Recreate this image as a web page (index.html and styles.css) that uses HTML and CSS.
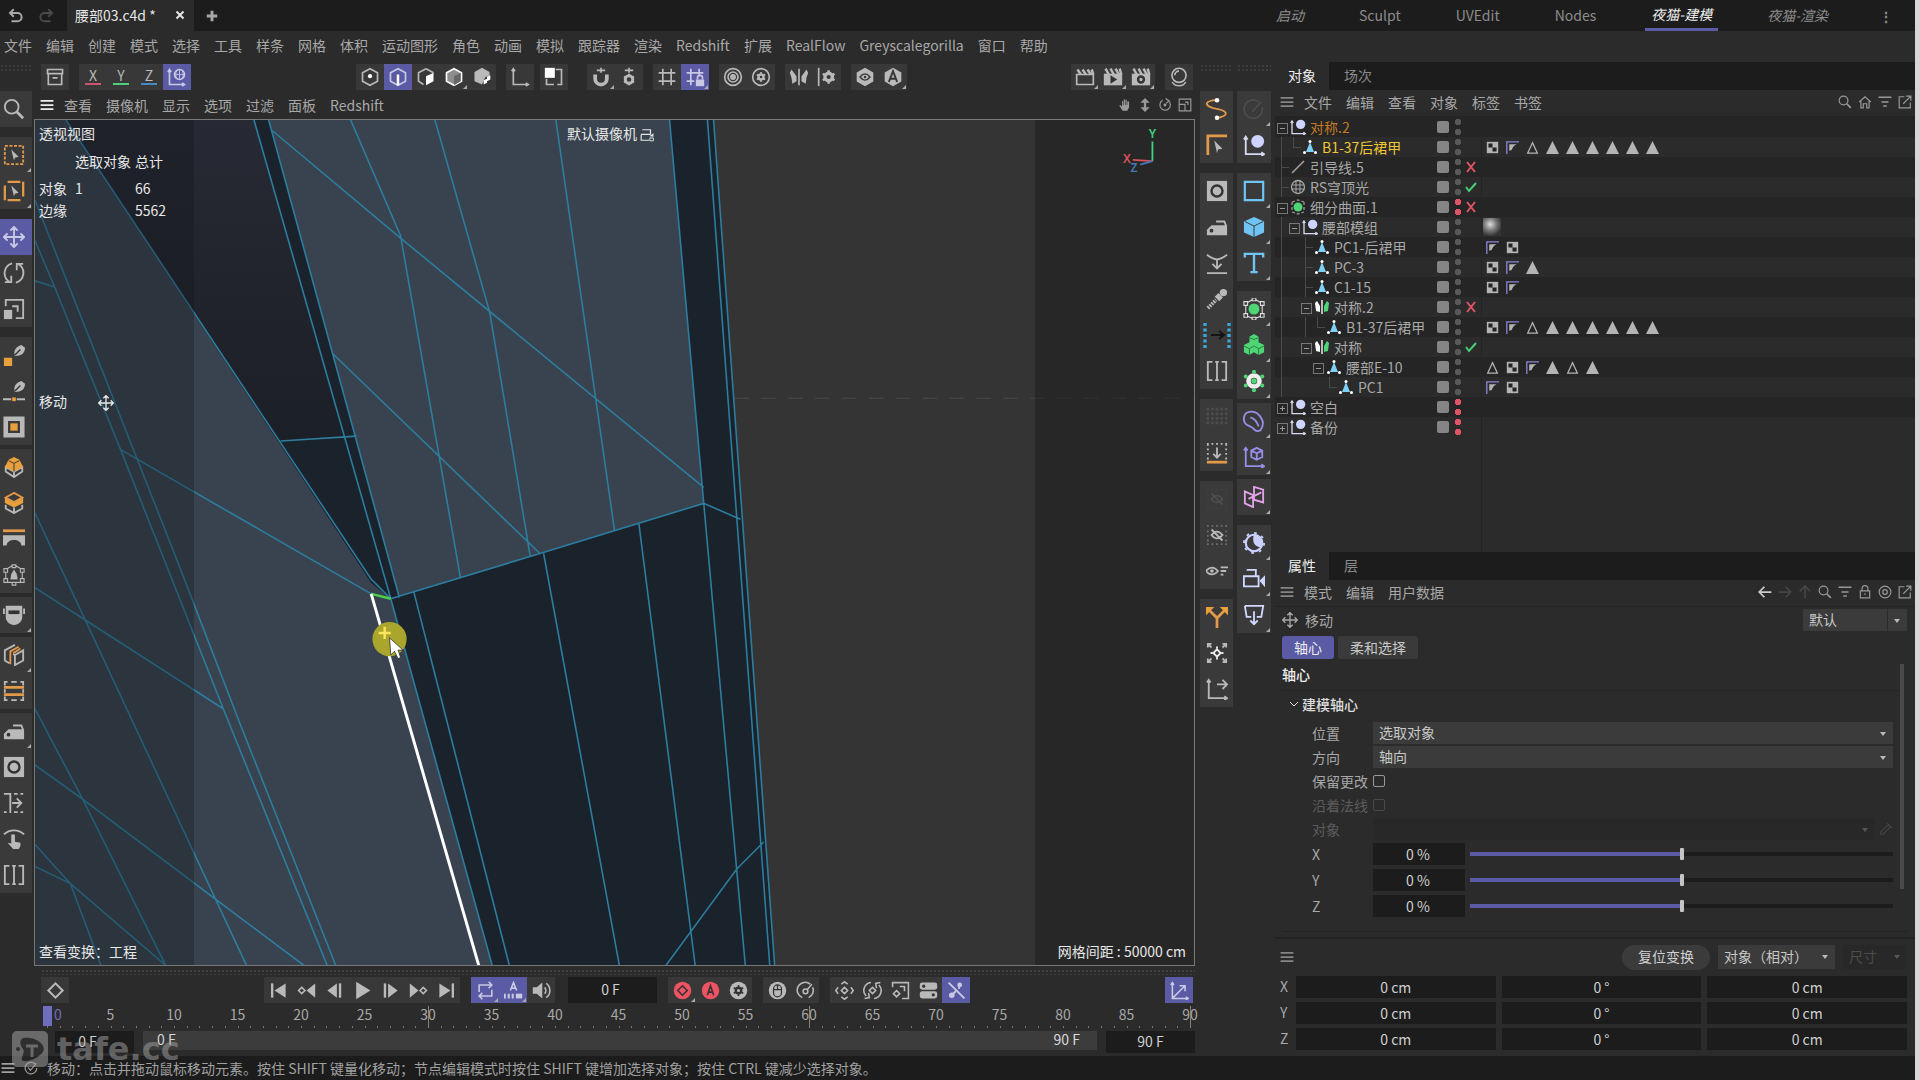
FILE: index.html
```html
<!DOCTYPE html>
<html lang="zh-CN">
<head>
<meta charset="utf-8">
<title>腰部03.c4d</title>
<link rel="stylesheet" href="styles.css">
</head>
<body>
<svg class="defs" aria-hidden="true">
<symbol id="undo" viewBox="0 0 24 24"><path d="M9 3 4 8l5 5M4 8h10a5.500 5.500 0 0 1 0 11H6" stroke-width="2.600"/></symbol>
<symbol id="redo" viewBox="0 0 24 24"><path d="m15 3 5 5-5 5M20 8H10a5.500 5.500 0 0 0 0 11h8" stroke-width="2.600"/></symbol>
<symbol id="x" viewBox="0 0 24 24"><path d="m5 5 14 14M19 5 5 19" stroke-width="4"/></symbol>
<symbol id="plus" viewBox="0 0 24 24"><path d="M12 3v18M3 12h18" stroke-width="5"/></symbol>
<symbol id="burger" viewBox="0 0 24 24"><path d="M1 5h22M1 12h22M1 19h22" stroke-width="3"/></symbol>
<symbol id="archive" viewBox="0 0 24 24"><path d="M3 3h18v5H3zM4 8v13h16V8M9 13h6"/></symbol>
<symbol id="world" viewBox="0 0 24 24"><path d="M3 4v17h18M1 6l2-3 2 3M18 19l3 2-3 2"/><circle cx="15" cy="9" r="6"/><path d="M9 9h12M15 3v12M12 4c-2 4-2 6 0 10M18 4c2 4 2 6 0 10" stroke-width="1"/></symbol>
<symbol id="hexdot" viewBox="0 0 24 24"><path d="m12 2 9 5v10l-9 5-9-5V7z"/><circle cx="12" cy="11" r="2.500" class="w"/></symbol>
<symbol id="hexedge" viewBox="0 0 24 24"><path d="m12 2 9 5v10l-9 5-9-5V7z"/><path d="M12 9v13" class="ws" stroke-width="3"/></symbol>
<symbol id="hexface" viewBox="0 0 24 24"><path d="m12 2 9 5M12 2 3 7v10l6 4"/><path d="m12 11 9-4v10l-9 5z" class="w"/></symbol>
<symbol id="hexsolid" viewBox="0 0 24 24"><path d="m12 2 9 5v10l-9 5-9-5V7z" fill="#8d8d8d" stroke="#fff"/><path d="m12 11 8-4v10l-8 5z" fill="#666" stroke="none"/></symbol>
<symbol id="hexuv" viewBox="0 0 24 24"><path d="m12 1 9 5v5l-5 1-4 9-9-4V6z" class="f"/><path d="m14 16 4-2v5l-4 2zM18 12l4-2v5l-4 2z" class="w"/></symbol>
<symbol id="axis" viewBox="0 0 24 24"><path d="M4 3v18h17M2 5l2-3 2 3M19 19l3 2-3 2"/></symbol>
<symbol id="sqin" viewBox="0 0 24 24"><path d="M14 3h7v18h-5M3 14v7h9"/><path d="M1 1h12v12H1z" class="w"/></symbol>
<symbol id="magnet" viewBox="0 0 24 24"><path d="M5 9v5a7 7 0 0 0 14 0V9" stroke-width="4.500"/><path d="M7 4h10M12 1v6"/></symbol>
<symbol id="plusgear" viewBox="0 0 24 24"><path d="M7 4h10M12 1v6"/><circle cx="12" cy="15" r="4.500" stroke-width="3.500"/><path d="M12 8v14M6 11.500l12 7M6 18.500l12-7" stroke-width="2.500" stroke-dasharray="3 8 3"/></symbol>
<symbol id="grid" viewBox="0 0 24 24"><path d="M7 2v20M17 2v20M2 7h20M2 17h20"/></symbol>
<symbol id="gridlock" viewBox="0 0 24 24"><path d="M7 2v20M17 2v8M2 7h20M2 17h9"/><path d="M13 15h10v8H13z" class="f"/><path d="M15 15v-2a3 3 0 0 1 6 0v2"/></symbol>
<symbol id="target" viewBox="0 0 24 24"><circle cx="12" cy="12" r="10"/><circle cx="12" cy="12" r="6"/><circle cx="12" cy="12" r="2" stroke-width="3"/></symbol>
<symbol id="focusring" viewBox="0 0 24 24"><circle cx="12" cy="12" r="10"/><circle cx="12" cy="12" r="4"/></symbol>
<symbol id="gearring" viewBox="0 0 24 24"><circle cx="12" cy="12" r="10"/><circle cx="12" cy="12" r="3" stroke-width="3"/><path d="M12 6v12M7 9l10 6M7 15l10-6" stroke-width="2" stroke-dasharray="2 8 2"/></symbol>
<symbol id="fly" viewBox="0 0 24 24"><path d="M12 2v20"/><path d="M9 11 3 3 1 7l2 6 1 7 5-3zM15 11l6-8 2 4-2 6-1 7-5-3z" class="f"/></symbol>
<symbol id="symgear" viewBox="0 0 24 24"><path d="M2 1v22"/><circle cx="14" cy="12" r="4.500" stroke-width="4"/><path d="M14 4v3M14 17v3M7 8l3 2M18 14l3 2M7 16l3-2M18 10l3-2" stroke-width="3"/></symbol>
<symbol id="hexeye" viewBox="0 0 24 24"><path d="m12 1 10 5.500v11L12 23 2 17.500v-11z" class="f"/><path d="M6 12c4-5 8-5 12 0-4 5-8 5-12 0z" stroke="#383838" stroke-width="1.600"/><circle cx="12" cy="12" r="1.500" fill="#383838" stroke="none"/></symbol>
<symbol id="hexa" viewBox="0 0 24 24"><path d="m12 1 10 5.500v11L12 23 2 17.500v-11z" class="f"/><path d="m7 18 5-13 5 13M9 14h6" stroke="#383838" stroke-width="2.400"/></symbol>
<symbol id="clap" viewBox="0 0 24 24"><path d="M2 9h20v12H2z"/><path d="m3 3 4 6M9 3l4 6M15 3l4 6M20 3l2 6" stroke-width="3"/></symbol>
<symbol id="clapplay" viewBox="0 0 24 24"><path d="M1 8h22v14H1z" class="f"/><path d="m3 2 4 7M9 2l4 7M15 2l4 7M20 2l2 7" stroke-width="3"/><path d="m9 10 8 5-8 5z" fill="#333" stroke="none"/></symbol>
<symbol id="clapgear" viewBox="0 0 24 24"><path d="M1 8h22v14H1z" class="f"/><path d="m3 2 4 7M9 2l4 7M15 2l4 7M20 2l2 7" stroke-width="3"/><circle cx="12" cy="15" r="3.500" stroke="#333" stroke-width="3"/></symbol>
<symbol id="ball" viewBox="0 0 24 24"><circle cx="12" cy="10" r="8.500"/><path d="M7 10a5 5 0 0 1 5-5M4 18c3 6 13 6 16 0"/></symbol>
<symbol id="hand" viewBox="0 0 24 24"><path d="M8 22 2 13l2-1 3 3V5h2v7h1V2h2v10h1V3h2v9h1V6h3v10l-3 6z" class="f"/></symbol>
<symbol id="updown" viewBox="0 0 24 24"><path d="m12 0 8 8h-6v8h6l-8 8-8-8h6V8H4z" class="f"/></symbol>
<symbol id="orbit" viewBox="0 0 24 24"><path d="M8 4a9 9 0 1 0 10 1M13 1l6 4-5 4"/><circle cx="12" cy="12" r="2.500" class="f"/></symbol>
<symbol id="maxi" viewBox="0 0 24 24"><path d="M2 2h20v20H2zM2 11h10v11M12 7h5v5"/></symbol>
<symbol id="search" viewBox="0 0 24 24"><circle cx="9.500" cy="9.500" r="7.500"/><path d="m15 15 7 7" stroke-width="3"/></symbol>
<symbol id="selrect" viewBox="0 0 24 24"><path d="M2 2h20v20H2z" class="o" stroke-dasharray="3.300 1.700"/><path d="m9 6 8 8-4 1-1 3z" class="f"/></symbol>
<symbol id="selbox" viewBox="0 0 24 24"><path d="M5 2h14M22 2v16M19 22H5M2 6v16" class="o" stroke-width="2.500"/><path d="m9 6 8 8-4 1-1 3z" class="f"/></symbol>
<symbol id="move" viewBox="0 0 24 24"><path d="M12 1v22M1 12h22M8 5l4-4 4 4M8 19l4 4 4-4M5 8l-4 4 4 4M19 8l4 4-4 4"/></symbol>
<symbol id="rot" viewBox="0 0 24 24"><path d="M10 1.500a11 11 0 0 0-3 20M2 22h7v-7M14 22.500a11 11 0 0 0 3-20M22 2h-7v7"/></symbol>
<symbol id="scale" viewBox="0 0 24 24"><path d="M3 9V2h19v20h-8M10 9h6v6"/><path d="M1 13h9v10H1z" class="f"/></symbol>
<symbol id="pen" viewBox="0 0 24 24"><path d="M13 13c-2-6 1-10 7-12l4 3c0 6-4 9-11 9z" class="f"/><path d="m13 12 6-6" stroke="#333" stroke-width="1.500"/><path d="M1 15h9v9H1z" class="of"/></symbol>
<symbol id="penline" viewBox="0 0 24 24"><path d="M13 13c-2-6 1-10 7-12l4 3c0 6-4 9-11 9z" class="f"/><path d="m13 12 6-6" stroke="#333" stroke-width="1.500"/><path d="M0 21h9M15 21h9"/><path d="M10 19h4v4h-4z" class="of"/></symbol>
<symbol id="inset" viewBox="0 0 24 24"><path d="M3 3h18v18H3z" stroke-width="5"/><path d="M8 8h8v8H8z" class="of"/></symbol>
<symbol id="cubetop" viewBox="0 0 24 24"><path d="m3 12 9 5 9-5v5l-9 6-9-6zM12 17v6"/><path d="m12 1 6 3 4 8-10 5-10-5 4-8z" class="of"/><path d="m6 5 6 3 6-3M12 8v9" stroke="#333" stroke-width="1"/></symbol>
<symbol id="cubemid" viewBox="0 0 24 24"><path d="m12 1 9 5-9 5-9-5z" class="o"/><path d="m2 6 10 6 10-6v6l-10 5-10-5z" class="of"/><path d="M3 14v4l9 5 9-5v-4M12 17v6"/></symbol>
<symbol id="bridge" viewBox="0 0 24 24"><path d="M0 3h24" class="o" stroke-width="3"/><path d="M0 8h24v11h-4c0-8-16-8-16 0H0z" class="f"/></symbol>
<symbol id="lattice" viewBox="0 0 24 24"><path d="M1 5h4v4H1zM19 5h4v4h-4zM1 16h4v4H1zM19 16h4v4h-4zM10 1h4v3h-4zM10 20h4v3h-4zM5 5l5-3M14 2l5 3M3 9v7M21 9v7M5 20h5M14 20h5" stroke-width="1.200"/><path d="m8 17 1-6 3-5 3 5 1 6z" class="f"/></symbol>
<symbol id="mask" viewBox="0 0 24 24"><path d="M3 2h18v12c0 5-4 9-9 9s-9-4-9-9z" class="f"/><path d="M6 9h12" stroke="#333" stroke-width="4"/><path d="M1 5v6M23 5v6"/></symbol>
<symbol id="layers" viewBox="0 0 24 24"><path d="m13 1-11 6v11l5 3M22 7v11l-9 5V12zM13 12l-2-1"/><path d="m17 3-9 5v14M19 5l-8 5" class="o"/></symbol>
<symbol id="stripes" viewBox="0 0 24 24"><path d="M2 1v5M22 1v5M2 18v5M22 18v5M2 2h3M9 2h6M19 2h3M2 22h3M9 22h6M19 22h3M2 10v4M22 10v4"/><path d="M1 8h22M1 16h22" class="o" stroke-width="3"/></symbol>
<symbol id="iron" viewBox="0 0 24 24"><path d="M1 21v-6l5-5h17v11z" class="f"/><path d="M11 6h9l2 5"/><circle cx="6" cy="16" r="2" fill="#333" stroke="none"/></symbol>
<symbol id="circsq" viewBox="0 0 24 24"><path d="M1 1h22v22H1z" class="f"/><circle cx="12" cy="12" r="6" stroke="#333" stroke-width="2.600"/></symbol>
<symbol id="slide" viewBox="0 0 24 24"><path d="M8 1v22M10 12h9M15 7l5 5-5 5M1 2h6M1 22h3M12 2h4M19 2h3M12 22h4M19 22h3"/></symbol>
<symbol id="touch" viewBox="0 0 24 24"><path d="M1 7c6-6 16-6 22 0"/><path d="M9 7h4v8l6 1v4l-2 3h-6l-6-7 4 1z" class="f"/></symbol>
<symbol id="split" viewBox="0 0 24 24"><path d="M2 1v22M22 1v22M12 1v22M2 2h5M2 22h5M17 2h5M17 22h5M10 2h4M10 22h4"/></symbol>
<symbol id="spline" viewBox="0 0 24 24"><path d="M12 2C-2 3-2 8 8 11c18 3 17 8 4 11" class="o"/><circle cx="12" cy="2.500" r="2.500" class="w"/><circle cx="12" cy="21.500" r="2.500" class="w"/></symbol>
<symbol id="blocked" viewBox="0 0 24 24"><path d="M17 4a10 10 0 1 0 4 6M10 15 20 4"/></symbol>
<symbol id="corner" viewBox="0 0 24 24"><path d="M2 23V2h21" class="o" stroke-width="3"/><path d="m9 7 9 9-5 1-1 4z" class="f"/></symbol>
<symbol id="null" viewBox="0 0 24 24"><path d="M3 4v18h18M1 6l2-3 2 3M20 20l3 2-3 2" stroke="#d6d9ef"/><circle cx="16" cy="8" r="7" fill="#ccd4ff" stroke="none"/></symbol>
<symbol id="square" viewBox="0 0 24 24"><path d="M2 2h20v20H2z" stroke="#70c4f4" stroke-width="2.400"/></symbol>
<symbol id="cube" viewBox="0 0 24 24"><path d="m12 1 11 5v12l-11 5-11-5V6z" fill="#70c4f4" stroke="none"/><path d="m2 6 10 5 10-5M12 11v12" stroke="#333" stroke-width="1"/></symbol>
<symbol id="text" viewBox="0 0 24 24"><path d="M2 6V2h20v4M12 2v20M8 22h8" stroke="#70c4f4" stroke-width="2.600"/></symbol>
<symbol id="flatten" viewBox="0 0 24 24"><path d="M1 3c4 3 7 5 11 5s7-2 11-5M12 8v9M7 13l5 5 5-5M1 23h22"/></symbol>
<symbol id="drill" viewBox="0 0 24 24"><circle cx="19" cy="5" r="4" class="f"/><path d="m12 12 4-4" stroke-width="7"/><path d="m2 22 9-9" stroke-width="4" stroke-dasharray="2 1"/></symbol>
<symbol id="dots2" viewBox="0 0 28 28"><path d="M2 2v25M26 2v25" stroke="#39a7de" stroke-width="3.400" stroke-dasharray="3 2.500"/><path d="M8 14h12M16 10l5 4-5 4" stroke="#141414"/></symbol>
<symbol id="dotarea" viewBox="0 0 24 24"><path d="M2 2v20M7 2v20M12 2v20M17 2v20M22 2v20" stroke-width="3" stroke-dasharray="3 2"/></symbol>
<symbol id="dotdown" viewBox="0 0 24 24"><path d="M1 2h22M2 2v17M22 2v17" stroke-dasharray="2 3"/><path d="M12 6v11M8 13l4 4 4-4"/><path d="M1 22h22" class="o" stroke-width="3"/></symbol>
<symbol id="doteye" viewBox="0 0 24 24"><path d="M1 2h22M1 22h22M2 7v12M22 7v12" stroke-dasharray="2 3" opacity=".4"/><path d="M6 12c4-5 8-5 12 0-4 5-8 5-12 0zM6 6l12 12"/></symbol>
<symbol id="eyelist" viewBox="0 0 24 24"><path d="M0 12c4-5 9-5 13 0-4 5-9 5-13 0zM16 8h8M16 12h6M16 16h3"/><circle cx="6.500" cy="12" r="2" class="f"/></symbol>
<symbol id="fork" viewBox="0 0 24 24"><path d="M12 24V13L3 4M12 13l9-9" class="o" stroke-width="3"/><path d="M0 1h9L0 10zM24 1h-9l9 9z" class="of"/></symbol>
<symbol id="focus" viewBox="0 0 24 24"><path d="M2 6V2h4M18 2h4v4M2 18v4h4M18 22h4v-4M2 2l4 4M22 2l-4 4M2 22l4-4M22 22l-4-4"/><path d="m12 8 4 4-4 4-4-4zM12 5v2M12 17v2M5 12h2M17 12h2" stroke="#eee"/></symbol>
<symbol id="axisright" viewBox="0 0 24 24"><path d="M3 3v19h19M1 5l2-3 2 3M20 20l3 2-3 2M12 7h10M18 2l5 5-5 5"/></symbol>
<symbol id="axisdiag" viewBox="0 0 24 24"><path d="M3 2v20h20M3 22 18 7M1 5l2-3 2 3M20 20l3 2-3 2M12 6h7v7"/></symbol>
<symbol id="subdiv" viewBox="0 0 24 24"><path d="M1 4h4v4H1zM19 4h4v4h-4zM1 17h4v4H1zM19 17h4v4h-4zM10 0h4v3h-4zM10 21h4v3h-4zM5 5l5-3M14 2l5 3M3 8v9M21 8v9M5 20l5 2M14 22l5-2" stroke="#ddd" stroke-width="1.200"/><circle cx="12" cy="12" r="6" class="g"/></symbol>
<symbol id="subs" viewBox="0 0 16 16"><path d="M2 3v10M14 3v10M2 3l6-2 6 2M2 13l6 2 6-2" stroke="#999" stroke-width="1.300" stroke-dasharray="3 2"/><circle cx="8" cy="8" r="4.500" class="g"/></symbol>
<symbol id="boxes" viewBox="0 0 24 24"><path d="m12 0 5 3v6l6 3v8l-6 3-5-3-5 3-6-3v-8l6-3V3z" class="g"/><path d="m1 13 6 3 5-3 5 3 6-3M7 16v7M17 16v7M7 4l5 2 5-2" stroke="#257a3b" stroke-width="1"/></symbol>
<symbol id="cloner" viewBox="0 0 24 24"><circle cx="12" cy="12" r="6" stroke="#eee" stroke-width="5"/><circle cx="12" cy="12" r="3" class="g"/><g class="g"><circle cx="12" cy="2" r="2.200"/><circle cx="12" cy="22" r="2.200"/><circle cx="3" cy="7" r="2.200"/><circle cx="21" cy="7" r="2.200"/><circle cx="3" cy="17" r="2.200"/><circle cx="21" cy="17" r="2.200"/></g></symbol>
<symbol id="bend" viewBox="0 0 24 24"><path d="M4 3c7-3 12-1 16 6 3 5 2 9-1 13-3 2-5 1-7-1C10 17 4 18 2 14S1 5 4 3zM8 8c4 1 7 4 9 10" stroke="#978ee8"/></symbol>
<symbol id="axiscube" viewBox="0 0 24 24"><path d="M3 3v19h19M1 5l2-3 2 3M20 20l3 2-3 2m-5-22 6 3v7l-6 3-6-3V5zM9 5l6 3 6-3M15 8v7" stroke="#978ee8"/></symbol>
<symbol id="planes" viewBox="0 0 24 24"><path d="M2 6v13l9 4V10zM12 5v10l10 3V4L12 1zM6 14l14-7" stroke="#e3a3e8"/></symbol>
<symbol id="sky" viewBox="0 0 24 24"><circle cx="12" cy="12" r="9" stroke="#c9d2ff" stroke-width="2.400"/><circle cx="12" cy="12" r="11" stroke="#c9d2ff" stroke-width="2" stroke-dasharray="3 5.600"/><path d="M12 3a9 9 0 0 1 8 13c-6 2-11-5-8-13z" fill="#c9d2ff" stroke="none"/></symbol>
<symbol id="cam" viewBox="0 0 24 24"><path d="M4 2h10v7M1 9h16v11H1z" stroke="#d0d8ff"/><path d="m18 14 6-6v13z" fill="#d0d8ff" stroke="none"/></symbol>
<symbol id="light" viewBox="0 0 24 24"><path d="M2 2h20l-2 12h-5M9 14H4L2 2M12 8v14M8 18l4 4 4-4" stroke="#d0d8ff"/></symbol>
<symbol id="home" viewBox="0 0 24 24"><path d="m2 12 10-9 10 9M5 10v12h4v-7h6v7h4V10"/></symbol>
<symbol id="filter" viewBox="0 0 24 24"><path d="M1 4h22M6 12h12M9 19h6" stroke-width="2.500"/></symbol>
<symbol id="ext" viewBox="0 0 24 24"><path d="M11 3H2v19h19v-9M9 15 22 2M14 2h8v8"/></symbol>
<symbol id="left" viewBox="0 0 24 24"><path d="M3 12h20M11 3l-9 9 9 9" stroke-width="3"/></symbol>
<symbol id="lock" viewBox="0 0 24 24"><path d="M4 10h16v12H4zM7 10V6a5 5 0 0 1 10 0v4M12 14v3"/></symbol>
<symbol id="obj" viewBox="0 0 16 16"><path d="m8 3 4 10H4z" fill="#7fd0f5" stroke="none"/><circle cx="8" cy="2.500" r="1.500" class="w"/><circle cx="2.500" cy="13.500" r="1.500" class="w"/><circle cx="13.500" cy="13.500" r="1.500" class="w"/></symbol>
<symbol id="sym" viewBox="0 0 16 16"><path d="M6 7 3 2 1 4l1 8 4 1z" class="w"/><path d="m10 7 3-5 2 2-1 8-4 1z" class="g"/><path d="M8 1v14" stroke="#eee" stroke-width="1.500"/></symbol>
<symbol id="line" viewBox="0 0 16 16"><path d="M2 14 14 2" stroke-width="1.400"/></symbol>
<symbol id="globe" viewBox="0 0 16 16"><circle cx="8" cy="8" r="6.500" stroke-width="1.300"/><path d="M2 6h12M2 10h12M6 2v12M10 2v12" stroke-width="1"/></symbol>
<symbol id="chk" viewBox="0 0 16 16"><path d="M1 1h14v14H1z" class="f"/><path d="M3 3h5v5H3zM8 8h5v5H8z" fill="#222" stroke="none"/></symbol>
<symbol id="phong" viewBox="0 0 16 16"><path d="M1 16V1h15" stroke="#8a86d8" stroke-width="1.600"/><path d="M4 4h9c-3 1-5 4-6 7l-3 1z" class="f"/></symbol>
<symbol id="tri" viewBox="0 0 16 16"><path d="m8 0 8 16H0z" class="f"/></symbol>
<symbol id="trio" viewBox="0 0 16 16"><path d="m8 2 6 13H2z" stroke-width="1.500"/></symbol>
<symbol id="yes" viewBox="0 0 12 12"><path d="m1 6 3 4 7-8" stroke="#49cf78"/></symbol>
<symbol id="no" viewBox="0 0 12 12"><path d="m2 1 8 10M10 1 2 11" stroke="#e05565"/></symbol>
<symbol id="dia" viewBox="0 0 24 24"><path d="m12 3 9 9-9 9-9-9z" stroke-width="2.600"/></symbol>
<symbol id="first" viewBox="0 0 24 24"><path d="M4 3v18" stroke-width="3"/><path d="M21 3v18L7 12z" class="f"/></symbol>
<symbol id="prevkey" viewBox="0 0 24 24"><path d="m6 8 4 4-4 4-4-4z"/><path d="M23 3v18l-11-9z" class="f"/></symbol>
<symbol id="prev" viewBox="0 0 24 24"><path d="M15 3v18L3 12z" class="f"/><path d="M19 3v18" stroke-width="3"/></symbol>
<symbol id="play" viewBox="0 0 24 24"><path d="m4 1 18 11L4 23z" class="f"/></symbol>
<symbol id="next" viewBox="0 0 24 24"><path d="m9 3 12 9-12 9z" class="f"/><path d="M5 3v18" stroke-width="3"/></symbol>
<symbol id="nextkey" viewBox="0 0 24 24"><path d="m18 8 4 4-4 4-4-4z"/><path d="m1 3 11 9-11 9z" class="f"/></symbol>
<symbol id="last" viewBox="0 0 24 24"><path d="M20 3v18" stroke-width="3"/><path d="m3 3 14 9-14 9z" class="f"/></symbol>
<symbol id="loop" viewBox="0 0 24 24"><path d="M4 14V5h16M16 1l4 4-4 4M20 11v8H4M8 15l-4 4 4 4"/></symbol>
<symbol id="auto" viewBox="0 0 24 24"><path d="m8 12 4-10 4 10M9 9h6"/><path d="M1 16v6M6 16v6M11 16v6" stroke-width="2.600"/><path d="M15 16h8v6h-8z" class="f"/></symbol>
<symbol id="sound" viewBox="0 0 24 24"><path d="M1 8h5l7-6v20l-7-6H1z" class="f"/><path d="M16 8c2 2 2 6 0 8M18 3c6 4 6 14 0 18"/></symbol>
<symbol id="rec" viewBox="0 0 24 24"><circle cx="12" cy="12" r="11" fill="#ee5363" stroke="none"/><path d="m12 6 6 6-6 6-6-6z" stroke="#333"/></symbol>
<symbol id="reca" viewBox="0 0 24 24"><circle cx="12" cy="12" r="11" fill="#ee5363" stroke="none"/><path d="m8 18 4-12 4 12M9 14h6" stroke="#333"/></symbol>
<symbol id="recgear" viewBox="0 0 24 24"><circle cx="12" cy="12" r="11" class="f"/><circle cx="12" cy="12" r="3.500" stroke="#333" stroke-width="3"/><path d="M12 5v14M6 8.500l12 7M6 15.500l12-7" stroke="#333" stroke-dasharray="3 8 3"/></symbol>
<symbol id="mouse" viewBox="0 0 24 24"><circle cx="12" cy="12" r="11" class="f"/><path d="M7 11h10M12 5v6M7 10a5 5 0 0 1 10 0v5a5 5 0 0 1-10 0z" stroke="#333" stroke-width="1.600"/></symbol>
<symbol id="gauge" viewBox="0 0 24 24"><path d="M8 21A10 10 0 1 1 18 4M21 8a10 10 0 0 1-5 13"/><circle cx="12" cy="13" r="3"/><path d="m14 11 6-7"/></symbol>
<symbol id="kmove" viewBox="0 0 24 24"><path d="m12 8 4 4-4 4-4-4zM8 4l4-3 4 3M8 20l4 3 4-3M4 8l-3 4 3 4M20 8l3 4-3 4"/></symbol>
<symbol id="krot" viewBox="0 0 24 24"><path d="m12 8 4 4-4 4-4-4zM10 2a10 10 0 0 0-6 17M2 22l6-1-1-6M14 22a10 10 0 0 0 6-17M22 2l-6 1 1 6"/></symbol>
<symbol id="kscale" viewBox="0 0 24 24"><path d="M2 8V2h20v20h-8M7 12l4 4-4 4-4-4zM11 7h6v6"/></symbol>
<symbol id="toggles" viewBox="0 0 24 24"><rect x="1" y="2" width="22" height="9" rx="3" class="f"/><rect x="1" y="13" width="22" height="9" rx="3" class="f"/><circle cx="6" cy="6.500" r="2" fill="#333" stroke="none"/><circle cx="18" cy="17.500" r="2" fill="#333" stroke="none"/></symbol>
<symbol id="nodes" viewBox="0 0 24 24"><path d="M2 2 22 22M5 19l6-6M16 4l-1 6" stroke-width="2.500"/><circle cx="6" cy="18" r="3.500" class="f"/><circle cx="16" cy="5" r="3" class="f"/></symbol>
<symbol id="tickring" viewBox="0 0 24 24"><path d="M19 5a10 10 0 1 0 3 7M7 11l4 5L21 4"/></symbol>
<symbol id="dropper" viewBox="0 0 24 24"><path d="M3 21v-4L16 4l4 4L7 21zM14 2l8 8"/></symbol>
<symbol id="camview" viewBox="0 0 24 24"><path d="M4 3h14v8M2 11h16M2 11v10h14"/><path d="m16 14 7-5v6z" class="f"/><path d="M17 17h6v5h-6z" stroke-width="1.500"/></symbol>
</svg>
<div class="app">
<header class="top">
  <button class="bare" aria-label="撤销"><svg class="i s18"><use href="#undo"/></svg></button>
  <button class="bare off" aria-label="重做"><svg class="i s18"><use href="#redo"/></svg></button>
  <div class="doc"><span>腰部03.c4d *</span><button class="bare" aria-label="关闭"><svg class="i s12"><use href="#x"/></svg></button></div>
  <button class="bare add" aria-label="新建"><svg class="i s14"><use href="#plus"/></svg></button>
  <nav class="spaces"><a href="#"><i>启动</i></a><a href="#">Sculpt</a><a href="#">UVEdit</a><a href="#">Nodes</a><a href="#" class="on"><i>夜猫-建模</i></a><a href="#"><i>夜猫-渲染</i></a><button class="bare more" aria-label="更多">⋮</button></nav>
</header>
<nav class="menu main"><a href="#">文件</a><a href="#">编辑</a><a href="#">创建</a><a href="#">模式</a><a href="#">选择</a><a href="#">工具</a><a href="#">样条</a><a href="#">网格</a><a href="#">体积</a><a href="#">运动图形</a><a href="#">角色</a><a href="#">动画</a><a href="#">模拟</a><a href="#">跟踪器</a><a href="#">渲染</a><a href="#">Redshift</a><a href="#">扩展</a><a href="#">RealFlow</a><a href="#">Greyscalegorilla</a><a href="#">窗口</a><a href="#">帮助</a></nav>
<main class="work">
<aside class="tools left">
  <div class="grip"></div>
  <div class="tg g20"><button aria-label="搜索"><svg class="i"><use href="#search"/></svg></button></div>
  <div class="tg g10"><button class="c" aria-label="框选"><svg class="i"><use href="#selrect"/></svg></button><button class="c" aria-label="选择"><svg class="i"><use href="#selbox"/></svg></button></div>
  <div class="tg g10"><button class="on" aria-label="移动"><svg class="i"><use href="#move"/></svg></button><button aria-label="旋转"><svg class="i"><use href="#rot"/></svg></button><button aria-label="缩放"><svg class="i"><use href="#scale"/></svg></button></div>
  <div class="tg g10"><button aria-label="多边形画笔"><svg class="i"><use href="#pen"/></svg></button><button aria-label="切线"><svg class="i"><use href="#penline"/></svg></button><button aria-label="嵌入"><svg class="i"><use href="#inset"/></svg></button></div>
  <div class="tg g4"><button aria-label="挤压"><svg class="i"><use href="#cubetop"/></svg></button><button aria-label="倒角"><svg class="i"><use href="#cubemid"/></svg></button><button aria-label="桥接"><svg class="i"><use href="#bridge"/></svg></button><button aria-label="晶格"><svg class="i"><use href="#lattice"/></svg></button></div>
  <div class="tg g4"><button class="c" aria-label="焊接"><svg class="i"><use href="#mask"/></svg></button></div>
  <div class="tg g4"><button class="c" aria-label="循环切割"><svg class="i"><use href="#layers"/></svg></button><button aria-label="平面切割"><svg class="i"><use href="#stripes"/></svg></button></div>
  <div class="tg g4"><button class="c" aria-label="熨烫"><svg class="i"><use href="#iron"/></svg></button><button aria-label="圆形"><svg class="i"><use href="#circsq"/></svg></button><button aria-label="滑动"><svg class="i"><use href="#slide"/></svg></button><button aria-label="推拉"><svg class="i"><use href="#touch"/></svg></button><button aria-label="分裂"><svg class="i"><use href="#split"/></svg></button></div>
</aside>
<section class="centre">
  <div class="bar">
    <div class="bg"><button aria-label="归档"><svg class="i"><use href="#archive"/></svg></button></div>
    <div class="bg"><button class="ax ax-x">X</button><button class="ax ax-y">Y</button><button class="ax ax-z">Z</button><button class="on" aria-label="坐标"><svg class="i"><use href="#world"/></svg></button></div>
    <div class="bg push"><button aria-label="点"><svg class="i"><use href="#hexdot"/></svg></button><button class="on" aria-label="边"><svg class="i"><use href="#hexedge"/></svg></button><button aria-label="多边形"><svg class="i"><use href="#hexface"/></svg></button><button class="c" aria-label="模型"><svg class="i"><use href="#hexsolid"/></svg></button><button aria-label="纹理"><svg class="i"><use href="#hexuv"/></svg></button></div>
    <div class="bg"><button aria-label="轴心"><svg class="i"><use href="#axis"/></svg></button></div>
    <div class="bg near"><button aria-label="工作平面"><svg class="i"><use href="#sqin"/></svg></button></div>
    <div class="bg far"><button class="c" aria-label="捕捉"><svg class="i"><use href="#magnet"/></svg></button><button aria-label="捕捉设置"><svg class="i"><use href="#plusgear"/></svg></button></div>
    <div class="bg"><button aria-label="网格"><svg class="i"><use href="#grid"/></svg></button><button class="on c" aria-label="锁定网格"><svg class="i"><use href="#gridlock"/></svg></button></div>
    <div class="bg"><button aria-label="衰减"><svg class="i"><use href="#target"/></svg></button><button aria-label="衰减设置"><svg class="i"><use href="#gearring"/></svg></button></div>
    <div class="bg"><button aria-label="对称"><svg class="i"><use href="#fly"/></svg></button><button aria-label="对称设置"><svg class="i"><use href="#symgear"/></svg></button></div>
    <div class="bg"><button aria-label="独显"><svg class="i"><use href="#hexeye"/></svg></button><button class="c" aria-label="自动"><svg class="i"><use href="#hexa"/></svg></button></div>
    <div class="bg push"><button class="c" aria-label="渲染视图"><svg class="i"><use href="#clap"/></svg></button><button class="c" aria-label="渲染"><svg class="i"><use href="#clapplay"/></svg></button><button class="c" aria-label="渲染设置"><svg class="i"><use href="#clapgear"/></svg></button></div>
    <div class="bg"><button aria-label="材质"><svg class="i"><use href="#ball"/></svg></button></div>
  </div>
  <nav class="menu view"><button class="bare burger" aria-label="菜单"><svg class="i s14"><use href="#burger"/></svg></button><a href="#">查看</a><a href="#">摄像机</a><a href="#">显示</a><a href="#">选项</a><a href="#">过滤</a><a href="#">面板</a><a href="#">Redshift</a>
    <span class="vi"><svg class="i s14"><use href="#hand"/></svg><svg class="i s14"><use href="#updown"/></svg><svg class="i s14"><use href="#orbit"/></svg><svg class="i s14"><use href="#maxi"/></svg></span></nav>
  <div class="viewport">
    <svg class="scene" viewBox="28 97 948 692" preserveAspectRatio="xMidYMid slice" aria-label="透视视图">
      <defs><linearGradient id="dk" x1="0" y1="0" x2="0" y2="1"><stop offset="0" stop-color="#272934"/><stop offset="1" stop-color="#161a20"/></linearGradient></defs>
      <path fill="#343434" d="M28 97h948v692H28z"/>
      <path stroke="#484848" stroke-dasharray="12 10" d="M600 325h376"/>
      <path fill="url(#dk)" d="M28 97h181l110 392-16-13L53 97z"/>
      <path fill="#38434f" d="M28 97h25l250 379 16 13 83 300H28z"/>
      <path fill="#1a222c" d="m229 360 62-4 28 133-16-13zM207 97h12l107 391-7 1z"/>
      <path fill="#38434f" d="M219 97h328l28 314-249 77z"/>
      <path fill="#1a222c" d="M547 97h36l50 692H402l-83-300 256-78z"/>
      <g fill="none" stroke="#2d7d9e" stroke-width="1.300">
        <path d="m53 97 143 215 107 161 16 16M207 97l112 392M219 97l107 391M229 360l62-4M222 106l105 88 248 204M286 97l41 95 49 280M355 97l45 158 33 199M454 97l48 336M547 97l28 314 34 378M578 97l51 692M583 97l50 692M272 289l169 163M319 489l122-37 134-41 30 13M319 489l83 300M338 484l78 305M444 452l62 337M522 428l46 361M544 789l58-79 22-22"/>
        <path d="m28 196 16 38 54 133 84 212 85 210M28 163l116 294 52 135 78 197M28 229l16 5M98 367l205 118M28 419l40 85 133 285M28 480l154 99M28 579l39 74 68 136M28 625l39 28 129 97 52 39M28 690l29 32 25 67M28 708l29 14 78 67"/>
      </g>
      <path fill="#101418" fill-opacity=".3" d="M28 97h130v692H28z"/><path fill="#151515" fill-opacity=".42" d="M846 97h130v692H846z"/>
      <path stroke="#49cf4c" stroke-width="2" d="m303 485 16 4"/><path stroke="#fff" stroke-width="2.400" d="m303 485 88 304"/>
      <circle cx="318" cy="522" r="14" fill="#aaa52c"/><path stroke="#ffe45c" stroke-width="2" d="M314 512v10M309 517h10"/>
      <path fill="#fff" stroke="#222" stroke-width=".6" d="m318 521 1 14 3-3 3 6 2-1-2-6h4z"/>
      <path stroke="#40d07c" stroke-width="1.500" d="M942 115v16"/><path stroke="#d9515c" stroke-width="1.500" d="m926 130 16 1"/><path stroke="#4579ba" stroke-width="1.500" d="m942 131-10 3"/>
      <g font-family="Noto Sans" font-size="10" font-weight="600"><text x="939" y="112" fill="#40d07c">Y</text><text x="918" y="133" fill="#d9515c">X</text><text x="924" y="140" fill="#4579ba">Z</text></g>
    </svg>
    <span class="hud title">透视视图</span>
    <table class="hud stats"><tr><td></td><td>选取对象</td><td>总计</td></tr><tr><td>对象</td><td>1</td><td>66</td></tr><tr><td>边缘</td><td></td><td>5562</td></tr></table>
    <span class="hud camera">默认摄像机 <svg class="i s14"><use href="#camview"/></svg></span>
    <span class="hud tool">移动 <svg class="i s16"><use href="#move"/></svg></span>
    <span class="hud xform">查看变换：工程</span>
    <span class="hud gridsp">网格间距 : 50000 cm</span>
  </div>
  <div class="timeline">
    <div class="grip wide"></div>
    <div class="bar play">
      <div class="bg"><button aria-label="关键帧"><svg class="i"><use href="#dia"/></svg></button></div>
      <div class="bg push"><button aria-label="起点"><svg class="i"><use href="#first"/></svg></button><button aria-label="上一关键帧"><svg class="i"><use href="#prevkey"/></svg></button><button aria-label="上一帧"><svg class="i"><use href="#prev"/></svg></button><button aria-label="播放"><svg class="i"><use href="#play"/></svg></button><button aria-label="下一帧"><svg class="i"><use href="#next"/></svg></button><button aria-label="下一关键帧"><svg class="i"><use href="#nextkey"/></svg></button><button aria-label="终点"><svg class="i"><use href="#last"/></svg></button></div>
      <div class="bg"><button class="on c" aria-label="循环"><svg class="i"><use href="#loop"/></svg></button><button class="on c" aria-label="自动"><svg class="i"><use href="#auto"/></svg></button><button aria-label="声音"><svg class="i"><use href="#sound"/></svg></button></div>
      <input class="field frame" value="0 F" aria-label="当前帧">
      <div class="bg"><button class="c" aria-label="记录"><svg class="i"><use href="#rec"/></svg></button><button aria-label="自动记录"><svg class="i"><use href="#reca"/></svg></button><button aria-label="记录设置"><svg class="i"><use href="#recgear"/></svg></button></div>
      <div class="bg"><button aria-label="鼠标"><svg class="i"><use href="#mouse"/></svg></button><button aria-label="速率"><svg class="i"><use href="#gauge"/></svg></button></div>
      <div class="bg"><button aria-label="位置"><svg class="i"><use href="#kmove"/></svg></button><button aria-label="旋转"><svg class="i"><use href="#krot"/></svg></button><button aria-label="缩放"><svg class="i"><use href="#kscale"/></svg></button><button aria-label="参数"><svg class="i"><use href="#toggles"/></svg></button><button class="on" aria-label="点级别"><svg class="i"><use href="#nodes"/></svg></button></div>
      <div class="bg push"><button class="on" aria-label="曲线"><svg class="i"><use href="#axisdiag"/></svg></button></div>
    </div>
    <div class="ruler"><span class="zero">0</span><span>5</span><span>10</span><span>15</span><span>20</span><span>25</span><span class="mark">30</span><span>35</span><span>40</span><span>45</span><span>50</span><span>55</span><span class="mark">60</span><span>65</span><span>70</span><span>75</span><span>80</span><span>85</span><span class="mark">90</span></div>
    <div class="range"><input class="field start" value="0 F" aria-label="起始帧"><div class="track"><span>0 F</span><span>90 F</span></div><input class="field end" value="90 F" aria-label="结束帧"></div>
  </div>
</section>
<aside class="tools">
  <div class="grip"></div>
  <div class="tg g20"><button aria-label="样条"><svg class="i"><use href="#spline"/></svg></button><button aria-label="角点"><svg class="i"><use href="#corner"/></svg></button></div>
  <div class="tg g10"><button aria-label="圆形"><svg class="i"><use href="#circsq"/></svg></button><button aria-label="熨烫"><svg class="i"><use href="#iron"/></svg></button><button aria-label="压平"><svg class="i"><use href="#flatten"/></svg></button><button aria-label="钻孔"><svg class="i"><use href="#drill"/></svg></button><button aria-label="连接"><svg class="i s28"><use href="#dots2"/></svg></button><button aria-label="分裂"><svg class="i"><use href="#split"/></svg></button></div>
  <div class="tg g10"><button class="off" aria-label="点阵" disabled><svg class="i"><use href="#dotarea"/></svg></button><button aria-label="下沉"><svg class="i"><use href="#dotdown"/></svg></button></div>
  <div class="tg g10"><button class="off" aria-label="隐藏" disabled><svg class="i"><use href="#doteye"/></svg></button><button aria-label="隐藏未选"><svg class="i"><use href="#doteye"/></svg></button><button aria-label="显示全部"><svg class="i"><use href="#eyelist"/></svg></button></div>
  <div class="tg g10"><button aria-label="分叉"><svg class="i"><use href="#fork"/></svg></button><button aria-label="居中"><svg class="i"><use href="#focus"/></svg></button><button aria-label="轴对齐"><svg class="i"><use href="#axisright"/></svg></button></div>
</aside>
<aside class="tools second">
  <div class="grip"></div>
  <div class="tg g20"><button class="off c" aria-label="画笔" disabled><svg class="i"><use href="#blocked"/></svg></button><button aria-label="空白"><svg class="i"><use href="#null"/></svg></button></div>
  <div class="tg g10"><button class="c" aria-label="矩形"><svg class="i"><use href="#square"/></svg></button><button class="c" aria-label="立方体"><svg class="i"><use href="#cube"/></svg></button><button class="c" aria-label="文本"><svg class="i"><use href="#text"/></svg></button></div>
  <div class="tg g10"><button class="c" aria-label="细分曲面"><svg class="i"><use href="#subdiv"/></svg></button><button class="c" aria-label="体积"><svg class="i"><use href="#boxes"/></svg></button><button class="c" aria-label="克隆"><svg class="i"><use href="#cloner"/></svg></button></div>
  <div class="tg g4"><button class="c" aria-label="弯曲"><svg class="i"><use href="#bend"/></svg></button><button class="c" aria-label="变形"><svg class="i"><use href="#axiscube"/></svg></button></div>
  <div class="tg g4"><button class="c" aria-label="平面"><svg class="i"><use href="#planes"/></svg></button></div>
  <div class="tg g10"><button class="c" aria-label="天空"><svg class="i"><use href="#sky"/></svg></button><button class="c" aria-label="摄像机"><svg class="i"><use href="#cam"/></svg></button><button class="c" aria-label="灯光"><svg class="i"><use href="#light"/></svg></button></div>
</aside>
<section class="side">
  <div class="tabs"><button class="on">对象</button><button>场次</button></div>
  <nav class="menu pane"><button class="bare burger" aria-label="菜单"><svg class="i s14"><use href="#burger"/></svg></button><a href="#">文件</a><a href="#">编辑</a><a href="#">查看</a><a href="#">对象</a><a href="#">标签</a><a href="#">书签</a><span class="vi"><svg class="i s14"><use href="#search"/></svg><svg class="i s14"><use href="#home"/></svg><svg class="i s14"><use href="#filter"/></svg><svg class="i s14"><use href="#ext"/></svg></span></nav>
  <ul class="tree">
    <li><span class="name or"><b class="m"></b><svg class="i"><use href="#null"/></svg>对称.2</span><i class="sq"></i><i class="dt"></i><span></span><span class="tags"></span></li>
    <li><span class="name ye"><b class="v"></b><b class="e"></b><svg class="i"><use href="#obj"/></svg>B1-37后裙甲</span><i class="sq"></i><i class="dt"></i><span></span><span class="tags"><svg><use href="#chk"/></svg><svg><use href="#phong"/></svg><svg><use href="#trio"/></svg><svg><use href="#tri"/></svg><svg><use href="#tri"/></svg><svg><use href="#tri"/></svg><svg><use href="#tri"/></svg><svg><use href="#tri"/></svg><svg><use href="#tri"/></svg></span></li>
    <li><span class="name"><b class="t"></b><svg class="i"><use href="#line"/></svg>引导线.5</span><i class="sq"></i><i class="dt"></i><svg class="i s12"><use href="#no"/></svg><span class="tags"></span></li>
    <li><span class="name"><b class="t"></b><svg class="i"><use href="#globe"/></svg>RS穹顶光</span><i class="sq"></i><i class="dt"></i><svg class="i s12"><use href="#yes"/></svg><span class="tags"></span></li>
    <li><span class="name"><b class="m"></b><svg class="i"><use href="#subs"/></svg>细分曲面.1</span><i class="sq"></i><i class="dt red"></i><svg class="i s12"><use href="#no"/></svg><span class="tags"></span></li>
    <li><span class="name"><b class="v"></b><b class="m"></b><svg class="i"><use href="#null"/></svg>腰部模组</span><i class="sq"></i><i class="dt"></i><span></span><span class="tags"><em class="mat"></em></span></li>
    <li><span class="name"><b class="v"></b><b></b><b class="t"></b><svg class="i"><use href="#obj"/></svg>PC1-后裙甲</span><i class="sq"></i><i class="dt"></i><span></span><span class="tags"><svg><use href="#phong"/></svg><svg><use href="#chk"/></svg></span></li>
    <li><span class="name"><b class="v"></b><b></b><b class="t"></b><svg class="i"><use href="#obj"/></svg>PC-3</span><i class="sq"></i><i class="dt"></i><span></span><span class="tags"><svg><use href="#chk"/></svg><svg><use href="#phong"/></svg><svg><use href="#tri"/></svg></span></li>
    <li><span class="name"><b class="v"></b><b></b><b class="t"></b><svg class="i"><use href="#obj"/></svg>C1-15</span><i class="sq"></i><i class="dt"></i><span></span><span class="tags"><svg><use href="#chk"/></svg><svg><use href="#phong"/></svg></span></li>
    <li><span class="name"><b class="v"></b><b></b><b class="m"></b><svg class="i"><use href="#sym"/></svg>对称.2</span><i class="sq"></i><i class="dt"></i><svg class="i s12"><use href="#no"/></svg><span class="tags"></span></li>
    <li><span class="name"><b class="v"></b><b></b><b class="v"></b><b class="e"></b><svg class="i"><use href="#obj"/></svg>B1-37后裙甲</span><i class="sq"></i><i class="dt"></i><span></span><span class="tags"><svg><use href="#chk"/></svg><svg><use href="#phong"/></svg><svg><use href="#trio"/></svg><svg><use href="#tri"/></svg><svg><use href="#tri"/></svg><svg><use href="#tri"/></svg><svg><use href="#tri"/></svg><svg><use href="#tri"/></svg><svg><use href="#tri"/></svg></span></li>
    <li><span class="name"><b class="v"></b><b></b><b class="m"></b><svg class="i"><use href="#sym"/></svg>对称</span><i class="sq"></i><i class="dt"></i><svg class="i s12"><use href="#yes"/></svg><span class="tags"></span></li>
    <li><span class="name"><b class="v"></b><b></b><b></b><b class="m"></b><svg class="i"><use href="#obj"/></svg>腰部E-10</span><i class="sq"></i><i class="dt"></i><span></span><span class="tags"><svg><use href="#trio"/></svg><svg><use href="#chk"/></svg><svg><use href="#phong"/></svg><svg><use href="#tri"/></svg><svg><use href="#trio"/></svg><svg><use href="#tri"/></svg></span></li>
    <li><span class="name"><b class="v"></b><b></b><b></b><b></b><b class="e"></b><svg class="i"><use href="#obj"/></svg>PC1</span><i class="sq"></i><i class="dt"></i><span></span><span class="tags"><svg><use href="#phong"/></svg><svg><use href="#chk"/></svg></span></li>
    <li><span class="name"><b class="m p"></b><svg class="i"><use href="#null"/></svg>空白</span><i class="sq"></i><i class="dt red"></i><span></span><span class="tags"></span></li>
    <li><span class="name"><b class="m p"></b><svg class="i"><use href="#null"/></svg>备份</span><i class="sq"></i><i class="dt red"></i><span></span><span class="tags"></span></li>
  </ul>
  <div class="tabs"><button class="on">属性</button><button>层</button></div>
  <nav class="menu pane"><button class="bare burger" aria-label="菜单"><svg class="i s14"><use href="#burger"/></svg></button><a href="#">模式</a><a href="#">编辑</a><a href="#">用户数据</a><span class="vi"><svg class="i s14 lit"><use href="#left"/></svg><svg class="i s14 dim flip"><use href="#left"/></svg><svg class="i s14 dim quarter"><use href="#left"/></svg><svg class="i s14"><use href="#search"/></svg><svg class="i s14"><use href="#filter"/></svg><svg class="i s14"><use href="#lock"/></svg><svg class="i s14"><use href="#focusring"/></svg><svg class="i s14"><use href="#ext"/></svg></span></nav>
  <div class="attr">
    <div class="arow"><svg class="i s16"><use href="#move"/></svg><span>移动</span><span class="sel preset"><select aria-label="预设"><option>默认</option></select></span></div>
    <div class="chips"><button class="on">轴心</button><button>柔和选择</button></div>
    <div class="scroll">
      <div class="form">
        <h2>轴心</h2>
        <h3><svg class="i s10"><path d="m1 3 4 4 4-4"/></svg>建模轴心</h3>
        <div class="fr"><label for="pos">位置</label><span class="sel"><select id="pos"><option>选取对象</option></select></span></div>
        <div class="fr"><label for="dir">方向</label><span class="sel"><select id="dir"><option>轴向</option></select></span></div>
        <div class="fr"><label for="keep">保留更改</label><input type="checkbox" id="keep"></div>
        <div class="fr dis"><label for="norm">沿着法线</label><input type="checkbox" id="norm" disabled></div>
        <div class="fr dis"><label for="obj-in">对象</label><span class="sel link"><input id="obj-in" disabled></span><svg class="i s14"><use href="#dropper"/></svg></div>
        <div class="fr sl"><label for="vx">X</label><input class="field" id="vx" value="0 %"><input type="range" aria-label="X" value="50"></div>
        <div class="fr sl"><label for="vy">Y</label><input class="field" id="vy" value="0 %"><input type="range" aria-label="Y" value="50"></div>
        <div class="fr sl"><label for="vz">Z</label><input class="field" id="vz" value="0 %"><input type="range" aria-label="Z" value="50"></div>
      </div>
      <div class="sb"></div>
    </div>
  </div>
  <div class="coords">
    <div class="ch"><button class="bare burger" aria-label="菜单"><svg class="i s14"><use href="#burger"/></svg></button><button class="pill">复位变换</button><span class="sel rel"><select aria-label="坐标系"><option>对象（相对）</option></select></span><span class="sel size dis"><select aria-label="尺寸" disabled><option>尺寸</option></select></span></div>
    <div class="cr"><label for="px">X</label><input class="field" id="px" value="0 cm"><input class="field" aria-label="X 旋转" value="0 °"><input class="field" aria-label="X 尺寸" value="0 cm"></div>
    <div class="cr"><label for="py">Y</label><input class="field" id="py" value="0 cm"><input class="field" aria-label="Y 旋转" value="0 °"><input class="field" aria-label="Y 尺寸" value="0 cm"></div>
    <div class="cr"><label for="pz">Z</label><input class="field" id="pz" value="0 cm"><input class="field" aria-label="Z 旋转" value="0 °"><input class="field" aria-label="Z 尺寸" value="0 cm"></div>
  </div>
</section>
</main>
<footer class="status"><svg class="i s14"><use href="#burger"/></svg><svg class="i s14"><use href="#tickring"/></svg><span>移动：点击并拖动鼠标移动元素。按住 SHIFT 键量化移动；节点编辑模式时按住 SHIFT 键增加选择对象；按住 CTRL 键减少选择对象。</span></footer>
<div class="brand"><svg viewBox="0 0 38 38"><rect x="1" y="1" width="36" height="36" rx="5" fill="#aaa"/><path d="M12 8c14-2 24 8 20 14-4 5-12 10-20 9-4-2 3-8 0-12S8 10 12 8z" fill="#333"/><path d="M15 16h12M21 16v11" stroke="#aaa" stroke-width="3"/><circle cx="7" cy="19" r="2" fill="#333"/></svg><span>tafe.cc</span></div>
</div>
</body>
</html>
```
FILE: styles.css
```css
* { box-sizing: border-box; }
body {
  margin: 0;
  min-height: 100vh;
  padding-right: 5px;
  background: #d8d4d8;
  color: #a8a8a8;
  font: 14px/20px "Noto Sans CJK SC", "Noto Sans", sans-serif;
}
button, input, select { font: inherit; color: inherit; border: 0; margin: 0; padding: 0; background: none; border-radius: 0; }
a { color: inherit; text-decoration: none; }
.defs { position: absolute; width: 0; height: 0; }
.i { width: 20px; height: 20px; flex: none; fill: none; stroke: currentColor; stroke-width: 2; }
.s10 { width: 10px; height: 10px; }
.s12 { width: 12px; height: 12px; }
.s14 { width: 14px; height: 14px; }
.s16 { width: 16px; height: 16px; }
.s18 { width: 18px; height: 18px; }
.f { fill: currentColor; stroke: none; }
.w { fill: #fff; stroke: none; }
.ws { stroke: #fff; }
.o { stroke: #e2994a; }
.of { fill: #e8a03c; stroke: none; }
.g { fill: #4fd476; stroke: none; }

.app { position: relative; display: flex; flex-direction: column; min-height: 100vh; background: #2b2b2b; overflow: hidden; }
.bare { display: flex; align-items: center; justify-content: center; }

.top { display: flex; align-items: center; height: 31px; padding-left: 7px; background: #1c1c1c; }
.top > .bare { width: 18px; margin-right: 12px; }
.top > .off { color: #4a4a4a; }
.top .doc { display: flex; align-items: center; justify-content: space-between; width: 127px; height: 31px; padding: 0 8px 2px 8px; background: #2b2b2b; color: #e6e6e6; }
.top > .add { margin-left: 9px; }
.spaces { display: flex; align-items: center; gap: 51px; height: 31px; margin-left: auto; padding-right: 24px; color: #8c8c8c; }
.spaces a { line-height: 28px; padding: 0 2px 2px; }
.spaces .on { color: #eee; border-bottom: 3px solid #5c5ca8; line-height: 26px; padding: 0 6px 1px; margin: 0 -4px; }
.spaces .more { width: 10px; font-weight: 700; }

.menu { display: flex; align-items: center; gap: 14px; white-space: nowrap; }
.main { height: 31px; padding: 0 0 4px 4px; }
.work { display: flex; flex: 1; }

.tools { width: 33px; margin-left: 5px; flex: none; }
.tools.left { width: 32px; margin: 0 2px 0 0; }
.tools.second { width: 34px; margin-left: 4px; margin-right: 4px; }
.grip { height: 8px; margin-top: 2px; background: radial-gradient(#3e3e3e 1px, transparent 1px) 0 0 / 4px 4px; }
.tg { background: #3a3a3a; }
.tg button { display: flex; position: relative; align-items: center; justify-content: center; width: 100%; height: 36px; color: #b9b9b9; }
.left .tg button { padding-right: 4px; }
.tg .i { width: 22px; height: 22px; }
.tg .s28 { width: 28px; height: 28px; }
.tg .off { color: #4c4c4c; }
.tg .on, .bg .on { background: #5a5aa5; color: #c9c9e4; }
.g20 { margin-top: 19px; }
.g10 { margin-top: 10px; }
.g4 { margin-top: 4px; }
.c::after { content: ""; position: absolute; right: 1px; bottom: 1px; border: 2px solid #aaa; border-top-color: transparent; border-left-color: transparent; }

.centre { flex: 1; min-width: 0; display: flex; flex-direction: column; }
.bar { display: flex; gap: 10px; height: 29px; padding: 2px 2px 0 7px; }
.bg { display: flex; height: 26px; background: #383838; }
.bg button { display: flex; position: relative; align-items: center; justify-content: center; width: 28px; color: #b9b9b9; }
.push { margin-left: auto; }
.near { margin-left: -4px; }
.far { margin-left: 9px; }
.bg .ax { line-height: 20px; padding: 0 7px 4px; }
.ax::after { content: ""; position: absolute; left: 6px; right: 6px; bottom: 5px; height: 2px; }
.ax-x::after { background: #c9566e; }
.ax-y::after { background: #4fd07a; }
.ax-z::after { background: #4389c4; }
.view { height: 28px; padding: 0 0 1px 6px; }
.burger { width: 14px; margin-right: -4px; color: #858585; }
.view .burger { color: #eee; }
.vi { display: flex; gap: 6px; margin-left: auto; padding-right: 3px; color: #999; }
.vi .lit { color: #ccc; }
.vi .dim { color: #444; }
.flip { transform: rotate(180deg); }
.quarter { transform: rotate(90deg); }

.viewport { position: relative; flex: 1; border: 1px solid #777; overflow: hidden; }
.scene { position: absolute; width: 100%; height: 100%; }
.hud { position: absolute; color: #e8e8e8; white-space: nowrap; }
.hud .i { vertical-align: middle; }
.title { left: 4px; top: 3px; }
.stats { left: 4px; top: 29px; border-collapse: collapse; }
.stats td { padding: 0 4px 0 0; height: 22px; }
.stats tr:first-child td { height: 28px; padding-bottom: 4px; }
.stats td:first-child { width: 36px; }
.camera { left: 532px; top: 3px; }
.tool { left: 4px; top: 271px; }
.tool .i { margin-left: 28px; }
.xform { left: 4px; bottom: 4px; }
.gridsp { right: 8px; bottom: 4px; }

.timeline { height: 90px; }
.wide { height: 6px; margin: 3px 0 0 7px; }
.play { height: 31px; gap: 11px; }
.play .i { width: 19px; height: 19px; }
.field { background: #1c1c1c; color: #d0d0d0; text-align: center; min-width: 0; }
.frame { width: 89px; height: 26px; padding: 0 4px 2px 0; margin-left: 2px; }
.ruler { display: flex; justify-content: space-between; height: 24px; margin: 0 5px 0 13px; line-height: 17px;
  background: repeating-linear-gradient(90deg, #777 0 1px, transparent 1px calc(100% / 90)) 0 20px / 100% 2px no-repeat; }
.ruler span { position: relative; width: 0; display: flex; justify-content: center; }
.ruler .zero { justify-content: flex-start; color: #6e6ebc; }
.ruler .zero::before { content: ""; flex: none; width: 9px; height: 20px; margin: 0 2px 0 -4px; background: #6e6ebc; }
.mark::after { content: ""; position: absolute; left: 0; top: 0; width: 1px; height: 22px; background: #8a8074; }
.range { display: flex; gap: 9px; height: 22px; margin: 1px 0 0 21px; }
.start { width: 79px; padding: 0 14px 2px 0; }
.end { width: 89px; padding-bottom: 2px; }
.track { flex: 1; display: flex; justify-content: space-between; line-height: 17px; padding: 0 17px 0 14px; margin-bottom: 3px; background: #3c3c3c; color: #d8d8d8; }

.side { width: 640px; flex: none; display: flex; flex-direction: column; }
.tabs { display: flex; height: 28px; background: #1c1c1c; flex: none; }
.tabs button { padding: 0 12px 2px; width: 54px; color: #8c8c8c; }
.tabs .on { background: #2b2b2b; color: #f0f0f0; }
.tabs button + button { width: 58px; text-align: left; padding-left: 15px; }
.pane { height: 27px; padding: 0 0 3px 5px; border-bottom: 1px solid #242424; flex: none; }
.tree { list-style: none; margin: 0; padding: 0; flex: 1; background: linear-gradient(#242424, #242424) 206px 0 / 1px 100% no-repeat; }
.tree li { display: grid; grid-template-columns: 162px 14px 14px 17px 1fr; align-items: center; height: 20px; }
.tree li:nth-child(odd) { background: #252525; }
.name { display: flex; align-items: center; height: 20px; white-space: nowrap; }
.name .i { width: 16px; height: 16px; margin: 0 4px 0 3px; }
.or { color: #c47a26; }
.ye { color: #f2c736; }
.name b { position: relative; width: 12px; height: 20px; }
.v, .t { background: linear-gradient(#4a4a4a, #4a4a4a) 6px 0 / 1px 100% no-repeat; }
.e { background: linear-gradient(#4a4a4a, #4a4a4a) 6px 0 / 1px 10px no-repeat; }
.t::after, .e::after { content: ""; position: absolute; left: 6px; top: 10px; width: 8px; height: 1px; background: #4a4a4a; }
.m::before { content: ""; position: absolute; left: 2px; top: 6px; width: 9px; height: 9px; border: 1px solid #777; background: linear-gradient(#999, #999) center / 5px 1px no-repeat; }
.p::before { background: linear-gradient(#999, #999) center / 5px 1px no-repeat, linear-gradient(#999, #999) center / 1px 5px no-repeat; }
.sq { width: 12px; height: 12px; border-radius: 2px; background: #858585; }
.dt { width: 14px; height: 20px; background: radial-gradient(circle, #585858 3px, transparent 3px) 0 0 / 14px 10px; }
.dt.red { background-image: radial-gradient(circle, #e05565 3px, transparent 3px); }
.tags { display: flex; gap: 7px; padding-left: 4px; align-items: center; }
.tags svg { width: 13px; height: 13px; color: #b4b4b4; fill: none; stroke: currentColor; }
.mat { width: 18px; height: 18px; margin-left: -3px; background: radial-gradient(circle at 40% 35%, #ddd, #777 40%, #333 75%); }

.attr { height: 332px; padding: 0 6px 0 7px; border-bottom: 2px solid #232323; flex: none; }
.arow { display: flex; align-items: center; gap: 7px; height: 25px; }
.sel { position: relative; display: flex; flex: 1; height: 22px; background: #3b3b3b; color: #c8c8c8; }
.sel select { appearance: none; flex: 1; min-width: 0; padding: 0 6px 2px; opacity: 1; }
.sel::after { content: ""; position: absolute; right: 7px; top: 10px; border: 3px solid transparent; border-top: 4px solid #bbb; pointer-events: none; }
.preset { flex: none; width: 104px; margin-left: auto; margin-right: 2px; background: linear-gradient(#2b2b2b, #2b2b2b) 84px 0 / 1px 100% no-repeat #3b3b3b; }
.chips { display: flex; gap: 4px; margin-top: 4px; }
.chips button { height: 23px; padding: 0 12px 2px; border-radius: 3px; background: #3a3a3a; color: #c8c8c8; }
.chips .on { background: #5a5aa5; color: #eee; }
.scroll { display: flex; margin-top: 4px; height: 269px; border-bottom: 1px solid #252525; }
.form { flex: 1; }
h2, h3 { margin: 0; font-size: 14px; line-height: 22px; color: #eee; font-weight: 500; }
h2 { height: 28px; border-bottom: 1px solid #252525; }
h3 { display: flex; align-items: center; gap: 3px; padding-left: 7px; color: #ddd; height: 26px; margin-bottom: 4px; }
h3 .i { stroke-width: 1; }
.fr { display: flex; align-items: center; height: 24px; padding: 0 7px 0 30px; }
.fr label { width: 61px; flex: none; white-space: nowrap; }
.fr.sl { height: 26px; }
.fr .field { width: 92px; height: 22px; margin-right: 5px; padding-right: 2px; }
.dis { color: #5c5c5c; }
.fr.dis .i { color: #444; }
.fr.dis .sel, .sel.dis { background: #282828; color: #4c4c4c; }
.fr.dis .sel { margin-right: 4px; }
.dis .sel::after, .sel.dis::after { border-top-color: #555; }
.dis select { color: #4c4c4c; }
input[type=checkbox] { appearance: none; width: 12px; height: 12px; border: 1px solid #999; border-radius: 2px; }
input[type=checkbox]:disabled { border-color: #4a4a4a; }
input[type=range] { appearance: none; flex: 1; min-width: 0; height: 12px; background: linear-gradient(90deg, #5a5aa5 50%, #1c1c1c 50%) center / 100% 4px no-repeat; }
input[type=range]::-webkit-slider-thumb { appearance: none; width: 4px; height: 12px; border-radius: 1px; background: #c4c4c4; }
.sb { width: 4px; height: 225px; margin: 1px 5px 0 0; background: #4a4a4a; }
.coords { height: 117px; padding: 5px 8px 0 5px; flex: none; }
.ch { display: flex; align-items: center; height: 26px; margin-bottom: 6px; }
.pill { margin-left: auto; margin-right: 8px; width: 88px; height: 25px; border-radius: 13px; background: #3b3b3b; color: #d0d0d0; padding-bottom: 2px; }
.rel, .size { flex: none; height: 24px; width: 117px; }
.size { width: 64px; margin-left: 8px; }
.cr { display: grid; grid-template-columns: 10px 1fr 1fr 1fr; gap: 6px; height: 26px; }
.cr .field { height: 22px; width: 100%; }

.status { display: flex; align-items: center; gap: 9px; height: 24px; padding: 0 0 1px 1px; background: #1c1c1c; color: #a0a0a0; white-space: nowrap; }
.brand { position: absolute; left: 11px; bottom: 12px; display: flex; align-items: center; gap: 8px; opacity: .5; color: #a4a4a4; pointer-events: none; font: 700 32px/38px "DejaVu Sans", sans-serif; }
.brand svg { width: 38px; height: 38px; }
```
